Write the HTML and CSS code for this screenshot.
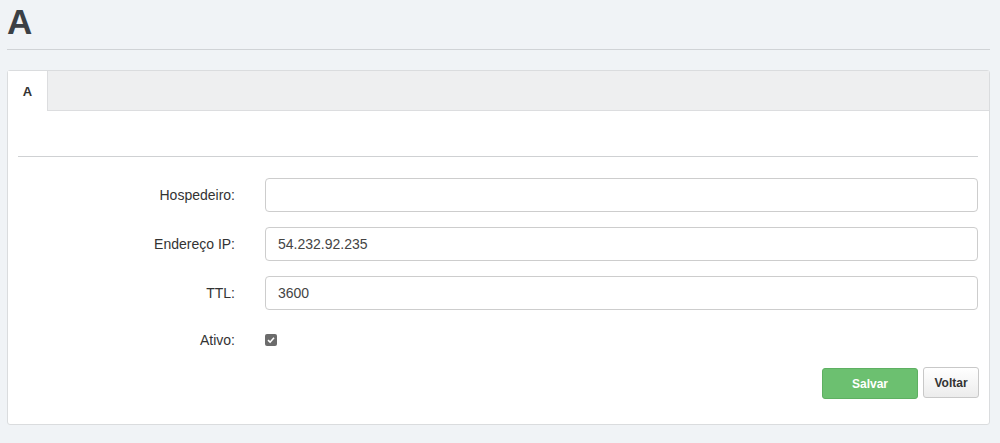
FILE: index.html
```html
<!DOCTYPE html>
<html lang="pt">
<head>
  <meta charset="UTF-8">
  <title>A</title>
  <link rel="stylesheet" href="styles.css">
</head>
<body>

<div class="page">
  <h1 class="page-title">A</h1>
  <hr class="title-rule">

  <div class="panel">
    <div class="tabs">
      <div class="tab active">A</div>
    </div>

    <div class="panel-body">
      <hr class="body-rule">

      <form class="form">
        <div class="row">
          <label for="host">Hospedeiro:</label>
          <input type="text" id="host" value="">
        </div>
        <div class="row">
          <label for="ip">Endereço IP:</label>
          <input type="text" id="ip" value="54.232.92.235">
        </div>
        <div class="row">
          <label for="ttl">TTL:</label>
          <input type="text" id="ttl" value="3600">
        </div>
        <div class="row row-check">
          <label for="active">Ativo:</label>
          <span class="check">
            <svg width="8" height="8" viewBox="0 0 8 8"><path d="M1 4.2 L3.1 6.2 L7 1.8" fill="none" stroke="#fff" stroke-width="1.6"/></svg>
          </span>
        </div>

        <div class="actions">
          <button type="button" class="btn btn-save">Salvar</button>
          <button type="button" class="btn btn-back">Voltar</button>
        </div>
      </form>
    </div>
  </div>
</div>

</body>
</html>
```

FILE: styles.css
```css
body {
  margin: 0;
  background-color: #f0f3f6;
  font-family: "Liberation Sans", Arial, sans-serif;
  color: #333;
}

.page {
  padding: 0 10px 0 7px;
}

.page-title {
  margin: 0;
  padding-top: 2px;
  height: 40px;
  font-size: 35px;
  line-height: 40px;
  font-weight: bold;
  color: #3b4045;
}

.title-rule {
  margin: 7px 0 20px 0;
  border: 0;
  border-top: 1px solid #d0d3d6;
}

.panel {
  background-color: #fff;
  border: 1px solid #dadcde;
  border-radius: 3px;
  height: 353px;
}

.tabs {
  display: flex;
  height: 39px;
  background-color: #eeeff0;
  border-bottom: 1px solid #dcdddf;
}

.tab {
  width: 39px;
  display: flex;
  align-items: center;
  justify-content: center;
  font-size: 13px;
  font-weight: bold;
  color: #333;
}

.tab.active {
  background-color: #fff;
  border-right: 1px solid #dcdddf;
  height: 40px;
}

.panel-body {
  padding: 0 11px 0 10px;
}

.body-rule {
  margin: 45px 0 21px 0;
  border: 0;
  border-top: 1px solid #cfd1d3;
}

.row {
  display: grid;
  grid-template-columns: 217px 1fr;
  column-gap: 30px;
  align-items: center;
  margin-bottom: 15px;
}

.row label {
  text-align: right;
  font-size: 14px;
  color: #333;
}

.row input {
  height: 34px;
  box-sizing: border-box;
  padding: 0 12px;
  border: 1px solid #cdcdcd;
  border-radius: 4px;
  font-family: "Liberation Sans", Arial, sans-serif;
  font-size: 14px;
  color: #444;
}

.row-check {
  height: 30px;
  margin-bottom: 12px;
}

.check {
  width: 12px;
  height: 12px;
  border-radius: 2px;
  background-color: #6b6b6b;
  display: flex;
  align-items: center;
  justify-content: center;
}

.actions {
  display: flex;
  justify-content: flex-end;
  gap: 5px;
  margin-right: -1px;
}

.btn {
  height: 31px;
  border-radius: 3px;
  font-family: "Liberation Sans", Arial, sans-serif;
  font-size: 12px;
  font-weight: bold;
  cursor: pointer;
}

.btn-save {
  width: 96px;
  margin-top: 1px;
  background-color: #6cc070;
  border: 1px solid #5eb062;
  color: #fff;
}

.btn-back {
  width: 56px;
  background: linear-gradient(#fff, #ececec);
  border: 1px solid #c8c8c8;
  color: #333;
}
```
